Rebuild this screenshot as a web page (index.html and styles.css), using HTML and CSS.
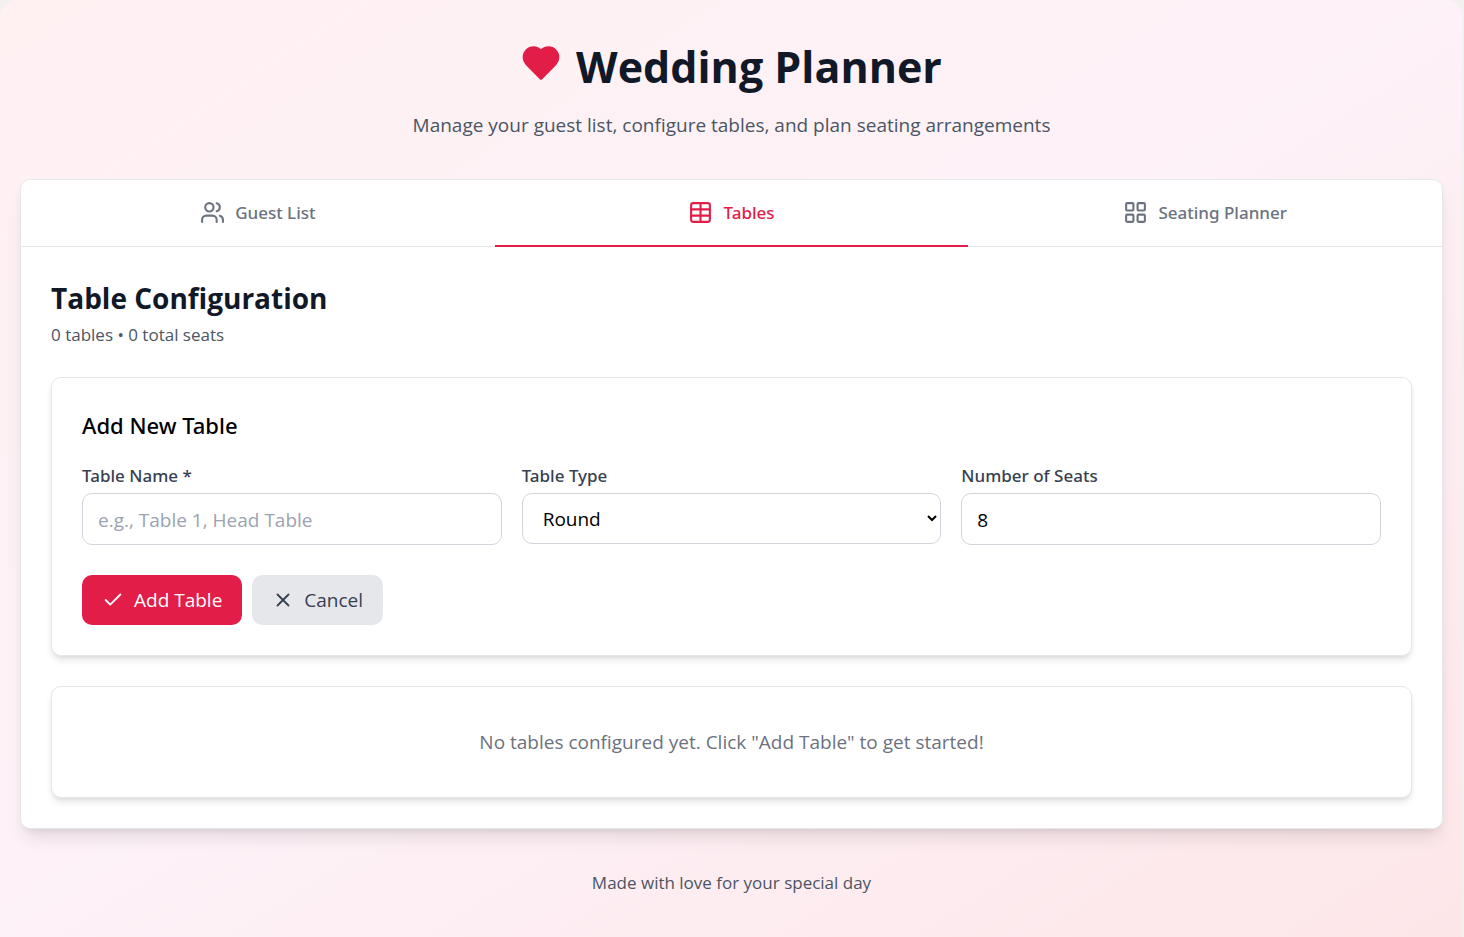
FILE: index.html
```html
<!DOCTYPE html>
<html lang="en">
<head>
  <meta charset="UTF-8">
  <meta name="viewport" content="width=device-width, initial-scale=1.0">
  <title>Wedding Planner</title>
  <link rel="stylesheet" href="styles.css">
</head>
<body>
  <div class="app">
    <header class="header">
      <h1 class="title">
        <svg class="heart" viewBox="0 0 24 24"><path d="M19 14c1.49-1.46 3-3.21 3-5.5A5.5 5.5 0 0 0 16.5 3c-1.76 0-3 .5-4.5 2-1.5-1.5-2.74-2-4.5-2A5.5 5.5 0 0 0 2 8.5c0 2.3 1.5 4.05 3 5.5l7 7Z"/></svg>Wedding Planner
      </h1>
      <p class="subtitle">Manage your guest list, configure tables, and plan seating arrangements</p>
    </header>

    <main class="panel">
      <nav class="tabs">
        <button type="button" class="tab">
          <svg class="icon" viewBox="0 0 24 24"><path d="M16 21v-2a4 4 0 0 0-4-4H6a4 4 0 0 0-4 4v2"/><circle cx="9" cy="7" r="4"/><path d="M22 21v-2a4 4 0 0 0-3-3.87"/><path d="M16 3.13a4 4 0 0 1 0 7.75"/></svg>
          Guest List
        </button>
        <button type="button" class="tab active">
          <svg class="icon" viewBox="0 0 24 24"><path d="M12 3v18"/><rect width="18" height="18" x="3" y="3" rx="2"/><path d="M3 9h18"/><path d="M3 15h18"/></svg>
          Tables
        </button>
        <button type="button" class="tab">
          <svg class="icon" viewBox="0 0 24 24"><rect width="7" height="7" x="3" y="3" rx="1"/><rect width="7" height="7" x="14" y="3" rx="1"/><rect width="7" height="7" x="14" y="14" rx="1"/><rect width="7" height="7" x="3" y="14" rx="1"/></svg>
          Seating Planner
        </button>
      </nav>

      <div class="content">
        <div>
          <h2 class="heading">Table Configuration</h2>
          <p class="summary">0 tables • 0 total seats</p>
        </div>

        <form class="card">
          <h3 class="card-title">Add New Table</h3>
          <div class="fields">
            <div class="field">
              <label for="tableName">Table Name *</label>
              <input type="text" id="tableName" placeholder="e.g., Table 1, Head Table">
            </div>
            <div class="field">
              <label for="tableType">Table Type</label>
              <select id="tableType">
                <option>Round</option>
                <option>Rectangular</option>
              </select>
            </div>
            <div class="field">
              <label for="seats">Number of Seats</label>
              <input type="number" id="seats" value="8" min="1">
            </div>
          </div>
          <div class="actions">
            <button type="submit" class="btn primary">
              <svg class="icon small" viewBox="0 0 24 24"><path d="M20 6 9 17l-5-5"/></svg>
              Add Table
            </button>
            <button type="button" class="btn secondary">
              <svg class="icon small" viewBox="0 0 24 24"><path d="M18 6 6 18"/><path d="m6 6 12 12"/></svg>
              Cancel
            </button>
          </div>
        </form>

        <div class="card empty">
          <p>No tables configured yet. Click "Add Table" to get started!</p>
        </div>
      </div>
    </main>

    <footer class="footer">Made with love for your special day</footer>
  </div>
</body>
</html>
```
FILE: styles.css
```css
* {
  box-sizing: border-box;
  margin: 0;
  padding: 0;
}
body {
  font-family: "Open Sans", "Noto Sans", sans-serif;
  font-size: 19px;
  line-height: 30px;
  color: #000;
  background-color: #f1f1f0;
}
button, input, select {
  font: inherit;
  color: inherit;
}
.app {
  min-height: 100vh;
  margin-right: 2px;
  padding: 42px 19px 40px 20px;
  border-radius: 16px 16px 0 0;
  background: linear-gradient(to bottom right, #fff1f2, #fdf2f8, #fde6e8);
}
.header {
  margin-bottom: 39px;
  text-align: center;
}
.title {
  margin-bottom: 18px;
  font-size: 43px;
  font-weight: 700;
  line-height: 50px;
  color: #111827;
}
.heart {
  width: 40px;
  height: 40px;
  margin-right: 15px;
  fill: #e11d48;
  stroke: #e11d48;
  stroke-width: 2;
  stroke-linejoin: round;
}
.subtitle {
  color: #4b5563;
}
.panel {
  border: 1px solid #e5e7eb;
  border-radius: 10px;
  background-color: #fff;
  box-shadow: 0 12px 18px -4px rgba(0, 0, 0, 0.1), 0 5px 8px -5px rgba(0, 0, 0, 0.1);
}
.tabs {
  display: flex;
  border-bottom: 1px solid #e5e7eb;
}
.tab {
  flex: 1;
  display: flex;
  align-items: center;
  justify-content: center;
  gap: 10px;
  padding: 20px;
  margin-bottom: -1px;
  border: none;
  border-bottom: 2px solid transparent;
  background: none;
  font-family: "Noto Sans", sans-serif;
  font-size: 17px;
  font-weight: 500;
  line-height: 25px;
  color: #6b7280;
  cursor: pointer;
}
.tab.active {
  border-bottom-color: #e11d48;
  color: #e11d48;
}
.icon {
  width: 25px;
  height: 25px;
  fill: none;
  stroke: currentColor;
  stroke-width: 2;
  stroke-linecap: round;
  stroke-linejoin: round;
}
.icon.small {
  width: 22px;
  height: 22px;
}
.content {
  display: flex;
  flex-direction: column;
  gap: 30px;
  padding: 30px;
}
.heading {
  font-size: 28px;
  font-weight: 700;
  line-height: 42px;
  color: #111827;
}
.summary {
  margin-top: 3px;
  font-size: 17px;
  line-height: 25px;
  color: #4b5563;
}
.card {
  padding: 30px;
  border: 1px solid #e5e7eb;
  border-radius: 10px;
  background-color: #fff;
  box-shadow: 0 5px 7px -1px rgba(0, 0, 0, 0.1), 0 2px 4px -2px rgba(0, 0, 0, 0.1);
}
.card-title {
  margin-bottom: 20px;
  font-family: "Noto Sans", sans-serif;
  font-size: 22px;
  font-weight: 500;
  line-height: 35px;
}
.fields {
  display: grid;
  grid-template-columns: repeat(3, 1fr);
  gap: 20px;
  align-items: start;
}
.field label {
  display: block;
  margin-bottom: 5px;
  font-family: "Noto Sans", sans-serif;
  font-size: 17px;
  font-weight: 500;
  line-height: 25px;
  color: #374151;
}
.field input, .field select {
  display: block;
  width: 100%;
  height: 52px;
  padding: 11px 15px 10px;
  border: 1px solid #d1d5db;
  border-radius: 10px;
  background-color: #fff;
}
.field select {
  height: 51px;
  padding: 11px 3px 10px 16px;
}
.field input::placeholder {
  color: #9ca3af;
}
.actions {
  display: flex;
  gap: 10px;
  margin-top: 30px;
}
.btn {
  display: flex;
  align-items: center;
  gap: 10px;
  padding: 10px 20px;
  border: none;
  border-radius: 10px;
  cursor: pointer;
}
.primary {
  background-color: #e11d48;
  color: #fff;
}
.secondary {
  background-color: #e5e7eb;
  color: #374151;
}
.empty {
  padding: 40px 30px;
  text-align: center;
  color: #6b7280;
}
.footer {
  margin-top: 41px;
  font-size: 17px;
  line-height: 25px;
  text-align: center;
  color: #4b5563;
}
```
